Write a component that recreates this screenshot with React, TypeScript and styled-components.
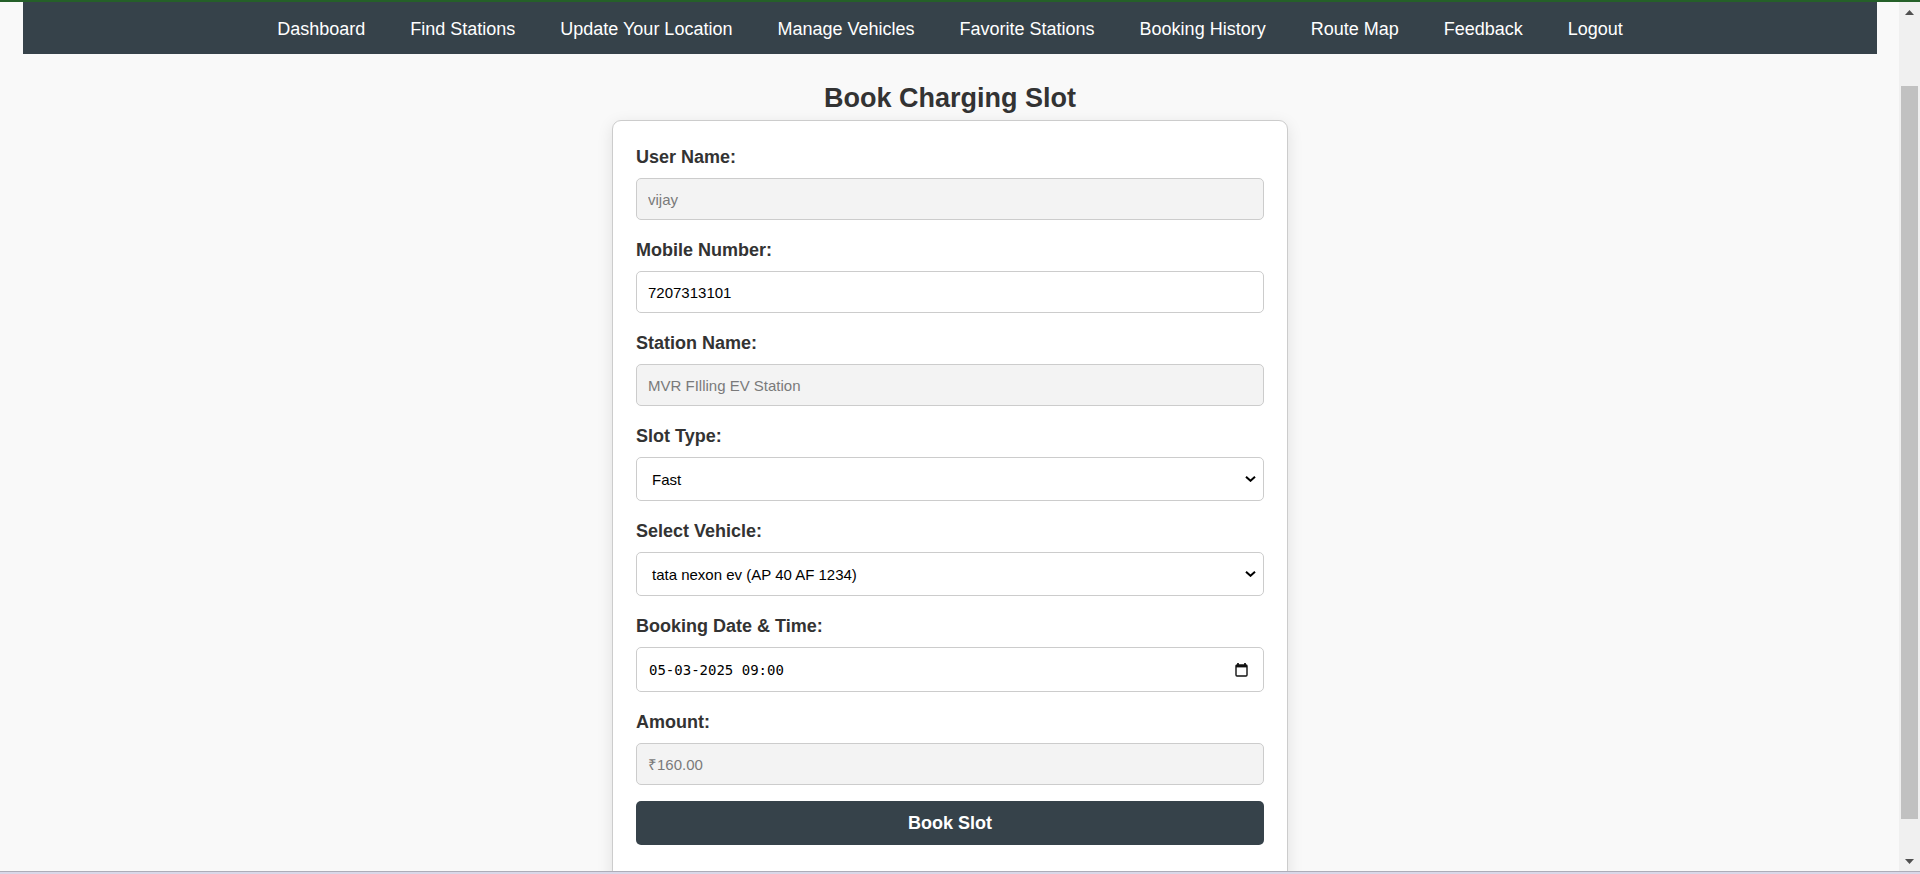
import React, { useState } from "react";
import styled, { createGlobalStyle } from "styled-components";

const slate = "#36424a";
const line = "#cccccc";

const GlobalStyle = createGlobalStyle`
  *, *::before, *::after { box-sizing: border-box; }
  html, body { margin: 0; padding: 0; }
  body {
    background: #f9f9f9;
    color: #333333;
    font-family: "Liberation Sans", Arial, sans-serif;
    font-size: 18px;
    line-height: 28px;
  }
`;

const Shell = styled.div`
  display: flex;
  flex-direction: column;
  height: 100vh;
  border-top: 2px solid #256029;
`;

const Frame = styled.div`
  display: flex;
  flex: 1;
  min-height: 0;
`;

const Page = styled.div`
  flex: 1;
  min-width: 0;
  overflow: hidden;
  padding: 0 22px 0 23px;
`;

const StatusEdge = styled.footer`
  flex: none;
  height: 3px;
  background: #d9d7e8;
  border-top: 1px solid #aeadb8;
`;

const Nav = styled.nav`
  display: flex;
  justify-content: center;
  gap: 45px;
  padding: 13px 0 11px;
  background: ${slate};
`;

const NavLink = styled.a`
  color: #ffffff;
  text-decoration: none;
  white-space: nowrap;
`;

const Main = styled.main`
  display: flex;
  flex-direction: column;
  align-items: center;
  padding-top: 22px;
`;

const Title = styled.h2`
  margin: 0;
  font-size: 27px;
  line-height: 44px;
`;

const Card = styled.form`
  display: flex;
  flex-direction: column;
  gap: 16px;
  width: 100%;
  max-width: 676px;
  padding: 22px 23px 40px;
  background: #ffffff;
  border: 1px solid ${line};
  border-radius: 9px;
  box-shadow: 0 4px 16px rgba(0, 0, 0, 0.1);
`;

const Field = styled.div`
  display: flex;
  flex-direction: column;
  gap: 7px;
`;

const Label = styled.label`
  font-weight: bold;
`;

const TextInput = styled.input`
  height: 42px;
  padding: 0 11px;
  border: 1px solid ${line};
  border-radius: 5px;
  background: #ffffff;
  color: #000000;
  font-family: inherit;
  font-size: 15px;

  &:disabled {
    background: #f3f3f3;
    color: #7a7a7a;
  }
`;

const SelectBox = styled.div`
  display: grid;
  align-items: center;

  > * {
    grid-area: 1 / 1;
  }

  > svg {
    justify-self: end;
    margin-right: 8px;
    pointer-events: none;
  }
`;

const Select = styled.select`
  appearance: none;
  height: 44px;
  padding: 0 15px;
  border: 1px solid ${line};
  border-radius: 5px;
  background: #ffffff;
  color: #000000;
  font-family: inherit;
  font-size: 15px;
`;

const DateBox = styled.div`
  display: flex;
  align-items: center;
  height: 45px;
  padding: 0 12px;
  border: 1px solid ${line};
  border-radius: 5px;
`;

const DateInput = styled.input`
  flex: 1;
  min-width: 0;
  padding: 0;
  border: 0;
  outline: 0;
  background: transparent;
  color: #000000;
  font-family: "DejaVu Sans Mono", monospace;
  font-size: 14px;
`;

const PickerButton = styled.button`
  display: flex;
  padding: 0 3px;
  border: 0;
  background: transparent;
`;

const SubmitButton = styled.button`
  height: 44px;
  border: 0;
  border-radius: 5px;
  background: ${slate};
  color: #ffffff;
  font-family: inherit;
  font-size: 18px;
  font-weight: bold;
`;

const ScrollBar = styled.div`
  display: flex;
  flex: none;
  flex-direction: column;
  width: 21px;
  background: #f0f0f0;
`;

const ScrollArrow = styled.button`
  display: flex;
  flex: none;
  align-items: center;
  justify-content: center;
  height: 20px;
  padding: 0;
  border: 0;
  background: transparent;
`;

const ScrollSpace = styled.div<{ $share: number }>`
  flex: ${(p) => p.$share} 0 0;
`;

const ScrollThumb = styled.div`
  flex: 733 0 0;
  margin: 0 2px;
  background: #c1c1c1;
`;

const links = [
  "Dashboard",
  "Find Stations",
  "Update Your Location",
  "Manage Vehicles",
  "Favorite Stations",
  "Booking History",
  "Route Map",
  "Feedback",
  "Logout",
];

function CalendarIcon() {
  return (
    <svg width="13" height="14" viewBox="0 0 13 14" aria-hidden="true">
      <path d="M2 0h2v2H2zM9 0h2v2H9z" fill="#333333" />
      <rect x="1" y="2" width="11" height="11" rx="1" fill="none" stroke="#111111" strokeWidth="1.4" />
      <path d="M1 2h11v2.4H1z" fill="#111111" />
    </svg>
  );
}

function Chevron() {
  return (
    <svg width="11" height="6" viewBox="0 0 11 6" aria-hidden="true">
      <path d="M1 0.800L5.500 4.800L10 0.800" fill="none" stroke="#000000" strokeWidth="2" />
    </svg>
  );
}

export default function App() {
  const [mobile, setMobile] = useState("7207313101");
  const [when, setWhen] = useState("05-03-2025 09:00");

  return (
    <>
      <GlobalStyle />
      <Shell>
        <Frame>
          <Page>
            <Nav>
              {links.map((text) => (
                <NavLink key={text} href="#">
                  {text}
                </NavLink>
              ))}
            </Nav>
            <Main>
              <Title>Book Charging Slot</Title>
              <Card onSubmit={(e) => e.preventDefault()}>
                <Field>
                  <Label htmlFor="user">User Name:</Label>
                  <TextInput id="user" value="vijay" disabled />
                </Field>
                <Field>
                  <Label htmlFor="mobile">Mobile Number:</Label>
                  <TextInput id="mobile" value={mobile} onChange={(e) => setMobile(e.target.value)} />
                </Field>
                <Field>
                  <Label htmlFor="station">Station Name:</Label>
                  <TextInput id="station" value="MVR FIlling EV Station" disabled />
                </Field>
                <Field>
                  <Label htmlFor="slot">Slot Type:</Label>
                  <SelectBox>
                    <Select id="slot">
                      <option>Fast</option>
                    </Select>
                    <Chevron />
                  </SelectBox>
                </Field>
                <Field>
                  <Label htmlFor="vehicle">Select Vehicle:</Label>
                  <SelectBox>
                    <Select id="vehicle">
                      <option>tata nexon ev (AP 40 AF 1234)</option>
                    </Select>
                    <Chevron />
                  </SelectBox>
                </Field>
                <Field>
                  <Label htmlFor="when">Booking Date &amp; Time:</Label>
                  <DateBox>
                    <DateInput id="when" value={when} onChange={(e) => setWhen(e.target.value)} />
                    <PickerButton type="button" aria-label="Open calendar">
                      <CalendarIcon />
                    </PickerButton>
                  </DateBox>
                </Field>
                <Field>
                  <Label htmlFor="amount">Amount:</Label>
                  <TextInput id="amount" value="₹160.00" disabled />
                </Field>
                <SubmitButton type="submit">Book Slot</SubmitButton>
              </Card>
            </Main>
          </Page>
          <ScrollBar>
            <ScrollArrow type="button" aria-label="Scroll up">
              <svg width="9" height="5" viewBox="0 0 9 5" aria-hidden="true">
                <path d="M4.500 0L9 5H0z" fill="#505050" />
              </svg>
            </ScrollArrow>
            <ScrollSpace $share={64} />
            <ScrollThumb />
            <ScrollSpace $share={32} />
            <ScrollArrow type="button" aria-label="Scroll down">
              <svg width="9" height="5" viewBox="0 0 9 5" aria-hidden="true">
                <path d="M0 0h9L4.500 5z" fill="#505050" />
              </svg>
            </ScrollArrow>
          </ScrollBar>
        </Frame>
        <StatusEdge />
      </Shell>
    </>
  );
}
